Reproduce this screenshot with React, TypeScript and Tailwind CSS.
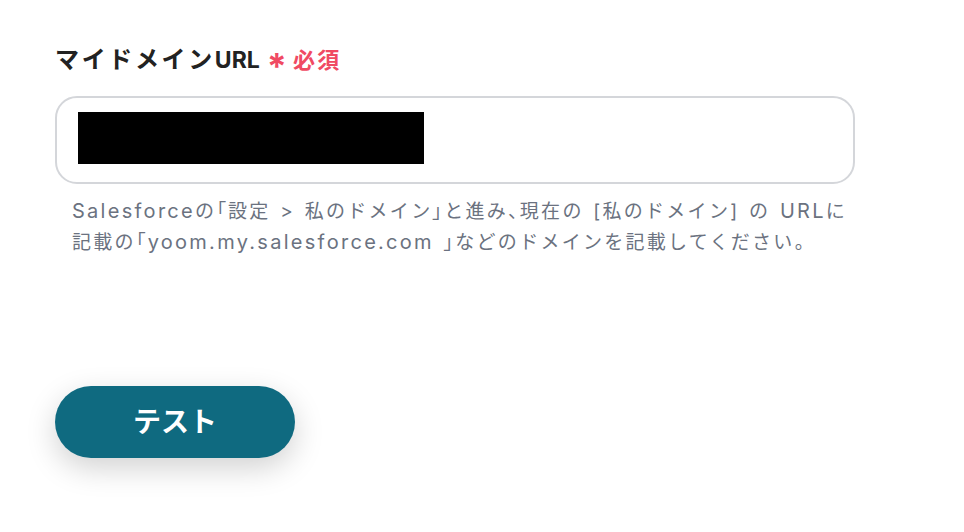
export default function App() {
  const lat = "text-[20px] leading-[31px]";
  const br = "[font-feature-settings:'palt']";
  return (
    <div
      className="w-[964px] h-[532px] bg-white pl-[55px] pt-[44px]"
      style={{ fontFamily: 'Inter, "Noto Sans CJK JP", sans-serif' }}
    >
      <div className="flex items-center h-[32px]">
        <span className="text-[24px] font-bold text-[#222222] tracking-[0.11em]">
          マイドメイン<span className="text-[23px] tracking-normal">URL</span>
        </span>
        <span className="ml-[7px] text-[#f04a63] text-[36px] font-bold leading-none mt-[12px]">*</span>
        <span className="ml-[6px] text-[#f04a63] text-[22px] font-bold tracking-[0.1em]">必須</span>
      </div>
      <div className="mt-[20px] w-[800px] h-[88px] rounded-[22px] border-2 border-[#d4d6da] pl-[21px] pt-[14px]">
        <div className="w-[346px] h-[52px] bg-black" />
      </div>
      <p className="mt-[12px] ml-[17px] text-[19px] leading-[31px] text-[#6b7280] tracking-[0.12em] [word-spacing:2px]">
        <span className={lat}>Salesforce</span>の<span className={br}>「</span>設定 &gt; 私のドメイン
        <span className={br}>」</span>と進み<span className={br}>、</span>現在の [私のドメイン] の{" "}
        <span className={lat}>URL</span>に
        <br />
        記載の<span className={br}>「</span>
        <span className={lat}>yoom.my.salesforce.com</span> <span className={br}>」</span>
        などのドメインを記載してください。
      </p>
      <button className="mt-[128px] w-[240px] h-[72px] rounded-full bg-[#0f6a80] text-white text-[28px] font-bold shadow-[0_10px_30px_rgba(0,0,0,0.18)]">
        テスト
      </button>
    </div>
  );
}
